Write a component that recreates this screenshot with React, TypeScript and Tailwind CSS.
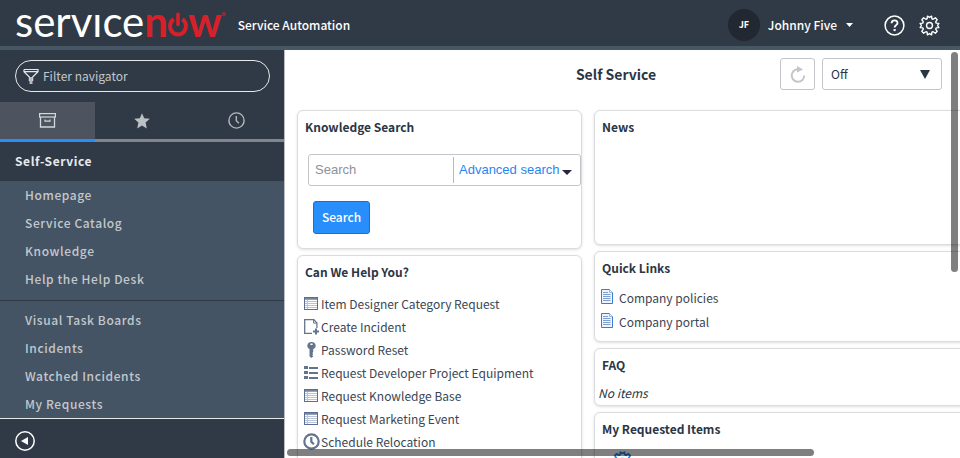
import React from "react";
import type { ReactNode } from "react";

const sans = "font-['Noto_Sans_CJK_SC','Noto_Sans',sans-serif]";

function PowerO() {
  return (
    <svg className="h-[25px] w-[20px]" viewBox="0 0 20 25" fill="none" stroke="#d6202a" aria-hidden="true">
      <path d="M5.6 7.2A7.9 8.4 0 1 0 14.4 7.2" strokeWidth="4" />
      <path d="M10 2.200V12.500" strokeWidth="3.600" strokeLinecap="round" />
    </svg>
  );
}

function Logo() {
  return (
    <a href="#home" aria-label="servicenow" className="flex items-baseline pb-1 font-['Lato',sans-serif] text-[42px] leading-[42px] text-white">
      <span>servıce</span>
      <span className="font-bold text-[#d6202a]">n</span>
      <PowerO />
      <span className="font-bold text-[#d6202a]">w</span>
      <svg className="mt-[12px] h-[4px] w-[4px] self-start" viewBox="0 0 4 4" fill="none" stroke="#d6202a" aria-hidden="true">
        <circle cx="2" cy="2" r="1.4" />
      </svg>
    </a>
  );
}

function FunnelIcon() {
  return (
    <svg className="h-[17px] w-[16px]" viewBox="0 0 16 17" fill="none" stroke="#e6e8ea" aria-hidden="true">
      <path d="M1 1.5h14v2.2L9.6 9v4M1 1.5v2.2L6.4 9v4M1 3.7h14" strokeWidth="1.2" />
      <path d="M8 9v7" strokeWidth="3" stroke="#b5babf" />
    </svg>
  );
}

function ArchiveIcon() {
  return (
    <svg className="h-[15px] w-[17px]" viewBox="0 0 17 15" fill="none" stroke="#d5d8dc" aria-hidden="true">
      <rect x=".6" y=".6" width="15.8" height="3.4" strokeWidth="1.2" />
      <path d="M1.5 4v10h14V4" strokeWidth="1.3" />
      <path d="M6 6.5v1.7h5V6.5" strokeWidth="1.2" />
    </svg>
  );
}

function StarIcon() {
  return (
    <svg className="h-[16px] w-[16px]" viewBox="0 0 16 16" fill="#bcc0c5" aria-hidden="true">
      <path d="M8 .3l2.2 5 5.6.5-4.2 3.8 1.2 5.9L8 12.5l-4.8 3 1.2-5.9L.2 5.8l5.6-.5z" />
    </svg>
  );
}

function ClockIcon({ bold = false }: { bold?: boolean }) {
  return (
    <svg className="h-[17px] w-[17px] shrink-0" viewBox="0 0 17 17" fill="none" stroke={bold ? "#64748b" : "#b4b9be"} strokeWidth={bold ? 2.2 : 1.4} aria-hidden="true">
      <circle cx="8.5" cy="8.5" r={bold ? 7.2 : 7.6} />
      <path d="M8.3 4v4.7l2.6 2.6" />
    </svg>
  );
}

function HelpIcon() {
  return (
    <svg className="h-[21px] w-[21px]" viewBox="0 0 21 21" fill="none" stroke="#fff" aria-hidden="true">
      <circle cx="10.5" cy="10.5" r="9.4" strokeWidth="1.5" />
      <path d="M7.6 8.2c0-3.8 5.9-3.7 5.9-.3 0 2.2-2.9 2.3-2.9 4.7" strokeWidth="1.9" />
      <path d="M10.6 14v2.1" strokeWidth="2.1" />
    </svg>
  );
}

function GearIcon({ blue = false }: { blue?: boolean }) {
  return (
    <svg className="h-[21px] w-[21px]" viewBox="0 0 24 24" fill="none" stroke={blue ? "#2684e6" : "#fff"} strokeWidth={blue ? 2 : 1.6} strokeLinejoin="round" aria-hidden="true">
      <path d="M9.3 4.3 9.6 1.3l2.4 1.5 2.4-1.5.3 3 1.4.6 2.6-1.7 2.1 2.1-1.7 2.6.6 1.4 3 .3L21.2 12l1.5 2.4-3 .3-.6 1.4 1.7 2.6-2.1 2.1-2.6-1.7-1.4.6-.3 3-2.4-1.5-2.4 1.5-.3-3-1.4-.6-2.6 1.7-2.1-2.1 1.7-2.6-.6-1.4-3-.3L2.8 12 1.3 9.6l3-.3.6-1.4-1.7-2.6 2.1-2.1 2.6 1.7z" />
      <circle cx="12" cy="12" r="3.4" />
    </svg>
  );
}

function RefreshIcon() {
  return (
    <svg className="h-[17px] w-[16px]" viewBox="0 0 16 17" fill="none" aria-hidden="true">
      <path d="M8.5 3.2A6.3 6.3 0 1 0 14.3 9.5" stroke="#c3c5ca" strokeWidth="1.9" />
      <path d="M7 0l6 3.6L7 6.6z" fill="#c3c5ca" />
    </svg>
  );
}

function TableIcon() {
  return (
    <svg className="h-[13px] w-[14px]" viewBox="0 0 14 13" aria-hidden="true">
      <rect x=".5" y=".5" width="13" height="12" fill="#fff" stroke="#5b6f95" />
      <path d="M1 1.9h12" stroke="#74849f" strokeWidth="1.8" />
      <path d="M3.5 3v9M1 4.500h12M1 6.500h12M1 8.500h12M1 10.500h12" stroke="#b9c3d8" />
    </svg>
  );
}

function PageAddIcon() {
  return (
    <svg className="h-[16px] w-[15px]" viewBox="0 0 15 16" fill="none" stroke="#64748b" aria-hidden="true">
      <path d="M8 14.4H.7V.7h9.2l3 3.2V9" strokeWidth="1.3" />
      <path d="M9.6.7v3.4h3.3" />
      <path d="M12 9.6v6M9 12.6h6" strokeWidth="2" />
    </svg>
  );
}

function KeyIcon() {
  return (
    <svg className="h-[16px] w-[9px]" viewBox="0 0 9 16" aria-hidden="true">
      <path d="M4.5 0C2 0 .3 1.6.3 3.8c0 1.6.9 2.6 2.2 3.2v7.2L4.3 16l1.9-1.6-.9-1.2.9-1.1-.9-1.2.9-1V7C7.8 6.4 8.7 5.3 8.7 3.8 8.7 1.6 7 0 4.5 0z" fill="#64748b" />
      <rect x="3.3" y="1.5" width="2.4" height="1.6" rx=".6" fill="#fff" />
    </svg>
  );
}

function ListIcon() {
  return (
    <svg className="h-[13px] w-[14px]" viewBox="0 0 14 13" fill="#64748b" aria-hidden="true">
      <path d="M0 0h4v3H0zM0 5h4v3H0zM0 10h4v3H0zM5 1h9v2H5zM5 6h9v2H5zM5 11h9v2H5z" />
    </svg>
  );
}

function DocIcon() {
  return (
    <svg className="mb-1 h-[15px] w-[12px]" viewBox="0 0 12 15" aria-hidden="true">
      <path d="M.5.5h8l3 3v11H.5z" fill="#eef4fd" stroke="#3b7dcb" />
      <path d="M8.5.5v3h3" fill="#fff" stroke="#8fb6e6" />
      <path d="M2 3.5h5M2 5.5h7.5M2 7.5h7.5M2 9.5h7.5M2 11.5h7.5" stroke="#7c9fd0" />
    </svg>
  );
}

function Card({ title, className = "", children }: { title: string; className?: string; children?: ReactNode }) {
  return (
    <section className={`overflow-hidden rounded-md border border-[#dadcdf] bg-white shadow-[0_1px_3px_rgba(0,0,0,0.12)] ${className}`}>
      <h2 className="px-[7px] pt-1.5 text-[12px] leading-5 font-bold">{title}</h2>
      {children}
    </section>
  );
}

function NavGroup({ items }: { items: string[] }) {
  return (
    <ul>
      {items.map((item) => (
        <li key={item}>
          <a href="#nav" className="block pl-[25px] text-[12px] leading-7 font-medium tracking-wider text-[#c3c8cc]">{item}</a>
        </li>
      ))}
    </ul>
  );
}

const helpLinks: { label: string; icon: ReactNode }[] = [
  { label: "Item Designer Category Request", icon: <TableIcon /> },
  { label: "Create Incident", icon: <PageAddIcon /> },
  { label: "Password Reset", icon: <KeyIcon /> },
  { label: "Request Developer Project Equipment", icon: <ListIcon /> },
  { label: "Request Knowledge Base", icon: <TableIcon /> },
  { label: "Request Marketing Event", icon: <TableIcon /> },
  { label: "Schedule Relocation", icon: <ClockIcon bold /> },
];

function Sidebar() {
  return (
    <aside className="flex w-[285px] shrink-0 flex-col border-r border-[#b9bdc2] bg-[#303a46]">
      <label className="my-[10px] mr-[14px] ml-[15px] flex h-8 shrink-0 items-center gap-1 rounded-full border border-[#e6e8ea] px-[7px]">
        <FunnelIcon />
        <input aria-label="Filter navigator" placeholder="Filter navigator" className="min-w-0 flex-1 bg-transparent text-[12px] outline-none placeholder:text-[#c3c7cb]" />
      </label>
      <div className="grid h-10 shrink-0 grid-cols-3">
        <button aria-label="All applications" className="flex items-center justify-center border-b-[3px] border-[#278efc] bg-[#4d535f]"><ArchiveIcon /></button>
        <button aria-label="Favorites" className="flex items-center justify-center border-b-[3px] border-[#81868e]"><StarIcon /></button>
        <button aria-label="History" className="flex items-center justify-center border-b-[3px] border-[#81868e]"><ClockIcon /></button>
      </div>
      <h2 className="shrink-0 pb-px pl-[15px] text-[12px] leading-[38px] font-bold tracking-wider text-[#e8eaec]">Self-Service</h2>
      <nav aria-label="Self-Service" className="min-h-0 flex-1 overflow-hidden bg-[#455464]">
        <div className="border-b border-[#303a46] pb-[7px]">
          <NavGroup items={["Homepage", "Service Catalog", "Knowledge", "Help the Help Desk"]} />
        </div>
        <div className="pt-[5px]">
          <NavGroup items={["Visual Task Boards", "Incidents", "Watched Incidents", "My Requests"]} />
        </div>
      </nav>
      <footer className="flex h-10 shrink-0 items-center border-t border-[#e6e8ea] px-[15px] pt-1">
        <button aria-label="Collapse navigator">
          <svg className="block h-5 w-5" viewBox="0 0 20 20" aria-hidden="true">
            <circle cx="10" cy="10" r="9.2" fill="none" stroke="#fff" strokeWidth="1.5" />
            <path d="M6 10l7-4v8z" fill="#fff" />
          </svg>
        </button>
      </footer>
    </aside>
  );
}

function Dashboard() {
  return (
    <main className="relative min-w-0 flex-1 overflow-hidden bg-white">
      <div className="flex h-[60px] items-start pt-2 pr-[18px] pl-[5px]">
        <div className="flex-1" />
        <h1 className="text-[14px] leading-8 font-bold">Self Service</h1>
        <div className="flex flex-1 justify-end gap-[7px]">
          <button aria-label="Refresh" className="flex h-8 w-[35px] items-center justify-center rounded-[3px] border border-[#c3c5ca]"><RefreshIcon /></button>
          <div className="relative">
            <select aria-label="Auto refresh" className="h-8 w-[120px] appearance-none rounded-[3px] border border-[#c3c5ca] px-2 text-[12px]">
              <option>Off</option>
            </select>
            <svg className="pointer-events-none absolute top-3 right-3 h-[9px] w-[10px]" viewBox="0 0 10 9" fill="#2b3644" aria-hidden="true"><path d="M0 0h10L5 9z" /></svg>
          </div>
        </div>
      </div>
      <div className="flex gap-3 pl-3">
        <div className="flex w-[285px] shrink-0 flex-col gap-1.5">
          <Card title="Knowledge Search" className="h-[139px]">
            <div className="mt-[17px] ml-[10px] flex h-8 items-center rounded-[3px] border border-[#c3c5ca] font-['Liberation_Sans',sans-serif] text-[13px]">
              <input aria-label="Search knowledge" placeholder="Search" className="h-[26px] w-[145px] border-r border-[#b5b8bd] px-1.5 pb-0.5 outline-none placeholder:text-[#8d9197]" />
              <a href="#advanced" className="flex items-center gap-[3px] pl-[5px] text-[#1f86f5]">
                Advanced search
                <svg className="mt-1 h-[5px] w-[10px]" viewBox="0 0 10 5" fill="#2b2340" aria-hidden="true"><path d="M0 0h10L5 5z" /></svg>
              </a>
            </div>
            <button className="mt-[15px] ml-[15px] h-[33px] w-[57px] rounded-[3px] border border-[#1272dd] bg-[#278efc] pb-0.5 text-[12px] font-medium text-white">Search</button>
          </Card>
          <Card title="Can We Help You?" className="h-[240px]">
            <ul className="pt-[10px] pl-[5px]">
              {helpLinks.map(({ label, icon }) => (
                <li key={label}>
                  <a href="#item" className="flex h-[23px] items-center gap-[2px] text-[12px] text-[#3b4654]">
                    <span className="flex w-4 justify-center">{icon}</span>
                    {label}
                  </a>
                </li>
              ))}
            </ul>
          </Card>
        </div>
        <div className="flex min-w-[500px] flex-1 flex-col gap-1.5">
          <Card title="News" className="h-[135px]" />
          <Card title="Quick Links" className="h-[91px]">
            <ul className="pt-2 pl-1.5">
              {["Company policies", "Company portal"].map((label) => (
                <li key={label}>
                  <a href="#link" className="flex h-6 items-center gap-1.5 text-[12px] text-[#3b4654]"><DocIcon />{label}</a>
                </li>
              ))}
            </ul>
          </Card>
          <Card title="FAQ" className="h-[58px]">
            <p className="pt-2 pl-[3px] text-[12px] leading-5 italic">No items</p>
          </Card>
          <Card title="My Requested Items" className="h-[120px]">
            <div className="pt-3 pl-[17px]"><GearIcon blue /></div>
          </Card>
        </div>
      </div>
      <div className="absolute top-0.5 right-0.5 h-[220px] w-[7px] rounded-full bg-black/50" />
      <div className="absolute bottom-0.5 left-0.5 h-[7px] w-[78%] rounded-full bg-black/50" />
    </main>
  );
}

export default function App() {
  return (
    <div className={`flex h-screen flex-col overflow-hidden text-[#2b3644] ${sans}`}>
      <header className="flex h-[50px] shrink-0 items-center border-b-4 border-[#485764] bg-[#303a46] pr-5 pl-[15px] text-white">
        <Logo />
        <span className="ml-3 pt-1 text-[12px] font-medium">Service Automation</span>
        <button className="ml-auto flex items-center pt-1 text-[12px] font-medium">
          <span className="mr-2 flex h-8 w-8 items-center justify-center rounded-full bg-[#222831] text-[9px] font-bold">JF</span>
          Johnny Five
          <svg className="ml-[9px] h-1 w-[7px]" viewBox="0 0 7 4" fill="#fff" aria-hidden="true"><path d="M0 0h7L3.5 4z" /></svg>
        </button>
        <button aria-label="Help" className="ml-[31px] pt-1"><HelpIcon /></button>
        <button aria-label="Settings" className="ml-[14px] pt-1"><GearIcon /></button>
      </header>
      <div className="flex min-h-0 flex-1">
        <Sidebar />
        <Dashboard />
      </div>
    </div>
  );
}
